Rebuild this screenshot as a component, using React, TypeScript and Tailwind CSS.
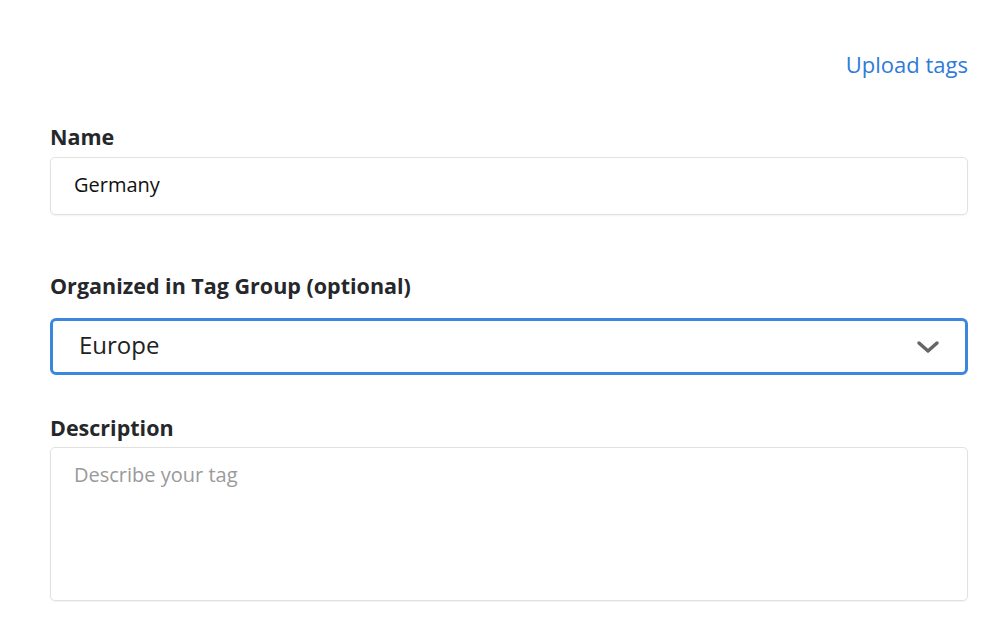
import { useState } from "react";

const App = () => {
  const [name, setName] = useState("Germany");
  const [group, setGroup] = useState("Europe");
  const [description, setDescription] = useState("");

  return (
    <div className="min-h-screen bg-white font-['Open_Sans',sans-serif] text-[#222]">
      <div className="pl-[50px] pr-[29px] pt-[50px]">
        {/* Header */}
        <div className="flex justify-end">
          <a href="#" className="text-[22px] leading-[28px] text-[#2f7bd8]">
            Upload tags
          </a>
        </div>

        <form className="mt-[46px]">
          {/* Name */}
          <div>
            <label htmlFor="name" className="block text-[21.5px] font-bold leading-[26px] text-[#26272b]">
              Name
            </label>
            <input
              id="name"
              value={name}
              onChange={(e) => setName(e.target.value)}
              className="mt-[7px] block h-[58px] w-full rounded-[5px] border border-[#e1e1e1] px-[23px] pb-[3px] text-[20px] text-[#111] shadow-[0_1px_2px_rgba(0,0,0,0.05)] outline-none"
            />
          </div>

          {/* Tag group */}
          <div className="mt-[58px]">
            <label htmlFor="group" className="block text-[21.5px] font-bold leading-[26px] text-[#26272b]">
              Organized in Tag Group (optional)
            </label>
            <div className="relative mt-[19px]">
              <select
                id="group"
                value={group}
                onChange={(e) => setGroup(e.target.value)}
                className="block h-[57px] w-full appearance-none rounded-[6px] border-[3px] border-[#3b87e0] bg-white px-[26px] pb-[3px] text-[24px] text-[#222] outline-none"
              >
                <option>Europe</option>
                <option>Asia</option>
                <option>Americas</option>
              </select>
              <svg
                className="pointer-events-none absolute right-[28px] top-1/2 h-[14px] w-[24px] -translate-y-1/2"
                viewBox="0 0 24 14"
                fill="none"
                stroke="#666"
                strokeWidth="3.5"
                strokeLinecap="round"
                strokeLinejoin="round"
              >
                <path d="M3 3l9 8 9-8" />
              </svg>
            </div>
          </div>

          {/* Description */}
          <div className="mt-[40px]">
            <label htmlFor="description" className="block text-[21.5px] font-bold leading-[26px] text-[#26272b]">
              Description
            </label>
            <textarea
              id="description"
              value={description}
              onChange={(e) => setDescription(e.target.value)}
              placeholder="Describe your tag"
              className="mt-[6px] block h-[154px] w-full resize-none rounded-[5px] border border-[#e1e1e1] px-[23px] pt-[12px] pb-[13px] text-[20px] text-[#111] shadow-[0_1px_2px_rgba(0,0,0,0.05)] outline-none placeholder:text-[#9a9a9a]"
            />
          </div>
        </form>
      </div>
    </div>
  );
};

export default App;
